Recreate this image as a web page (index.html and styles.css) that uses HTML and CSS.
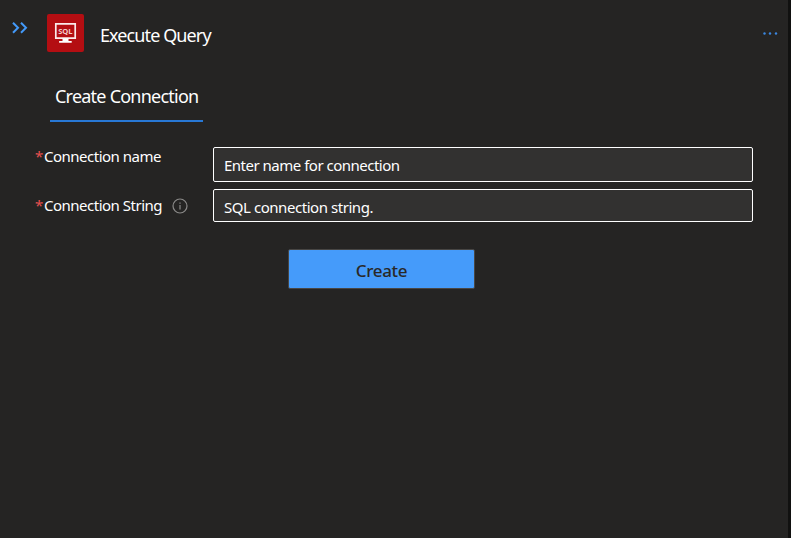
FILE: index.html
```html
<!DOCTYPE html>
<html lang="en">
<head>
<meta charset="utf-8">
<title>Execute Query</title>
<link rel="stylesheet" href="styles.css">
</head>
<body>
<main class="panel">
  <header class="header">
    <svg class="collapse" width="16" height="12" viewBox="0 0 16 12"><path d="M1 .8 6 5.8 1 10.8M9 .8 14 5.8 9 10.8"/></svg>
    <svg class="logo" width="37" height="38" viewBox="0 0 37 38">
      <rect width="37" height="38" rx="2" fill="#b40e12"/>
      <path d="M8.8 9.8h19.4v14.4H8.8z" fill="none" stroke="#fbeaea" stroke-width="1.7"/>
      <path d="M15.5 24.5h6v2.5h3.2v1.8H12.1V27h3.4z" fill="#fff"/>
      <text x="18.4" y="19.8" text-anchor="middle" class="logo-text">SQL</text>
    </svg>
    <h1 class="title">Execute Query</h1>
    <svg class="more" width="16" height="4" viewBox="0 0 16 4"><circle cx="2.5" cy="1.5" r="1.2"/><circle cx="8" cy="1.5" r="1.2"/><circle cx="14" cy="1.5" r="1.2"/></svg>
  </header>
  <nav class="tabs"><a class="tab">Create Connection</a></nav>
  <form class="form">
    <div class="row">
      <label class="label"><span class="star">*</span><span>Connection name</span></label>
      <div class="field name">Enter name for connection</div>
    </div>
    <div class="row">
      <label class="label second"><span class="star">*</span><span>Connection String</span>
        <svg class="info" width="16" height="16" viewBox="0 0 16 16"><circle cx="8" cy="8" r="7"/><path d="M8 7v4.5M8 4.5v1.2"/></svg>
      </label>
      <div class="field string">SQL connection string.</div>
    </div>
    <button class="create" type="button">Create</button>
  </form>
</main>
</body>
</html>
```
FILE: styles.css
```css
* { box-sizing: border-box; }
body {
  margin: 0;
  background: #111110;
  color: #fff;
  font-family: "Noto Sans", "Open Sans", sans-serif;
}
.panel {
  width: 788px;
  height: 538px;
  background: #252423;
}
.header {
  display: flex;
  height: 75px;
  padding: 14px 10px 0 12px;
}
.collapse {
  margin-top: 8px;
  fill: none;
  stroke: #4399f8;
  stroke-width: 2;
}
.logo { margin-left: 19px; }
.logo-text {
  fill: #f3caca;
  font: bold 7.6px "Open Sans", sans-serif;
}
.title {
  margin: 8px 0 0 16px;
  font-size: 18px;
  font-weight: 400;
  line-height: 26px;
  letter-spacing: -0.9px;
}
.more {
  margin: 18px 0 0 auto;
  fill: #3b86e0;
}
.tabs {
  display: flex;
  padding-left: 50px;
}
.tab {
  width: 153px;
  height: 47px;
  padding: 8px 0 0 5px;
  border-bottom: 2px solid #2878d5;
  font-size: 18px;
  line-height: 26px;
  letter-spacing: -0.77px;
  white-space: nowrap;
}
.form {
  display: flex;
  flex-direction: column;
  gap: 7px;
  padding: 25px 35px 0;
}
.row { display: flex; }
.label {
  display: flex;
  width: 178px;
  font-size: 15px;
  line-height: 18px;
  letter-spacing: -0.5px;
  white-space: nowrap;
}
.second { padding-top: 7px; }
.star {
  width: 9px;
  color: #e8504f;
}
.info {
  margin: 2px 0 0 10px;
  fill: none;
  stroke: #8b8a89;
  stroke-width: 1.2;
}
.field {
  width: 540px;
  padding-left: 10px;
  border: 1px solid #fff;
  border-radius: 2px;
  background: #323130;
  font-size: 15px;
  letter-spacing: -0.5px;
}
.name {
  height: 35px;
  line-height: 35px;
}
.string {
  height: 33px;
  line-height: 35px;
  letter-spacing: -0.45px;
}
.create {
  width: 187px;
  height: 40px;
  margin: 20px 0 0 253px;
  padding: 2px 0 0;
  border: 1px solid #484644;
  border-radius: 2px;
  background: #459bfa;
  color: #292827;
  font: 500 17px "Noto Sans", "Open Sans", sans-serif;
  letter-spacing: -0.35px;
}
```
